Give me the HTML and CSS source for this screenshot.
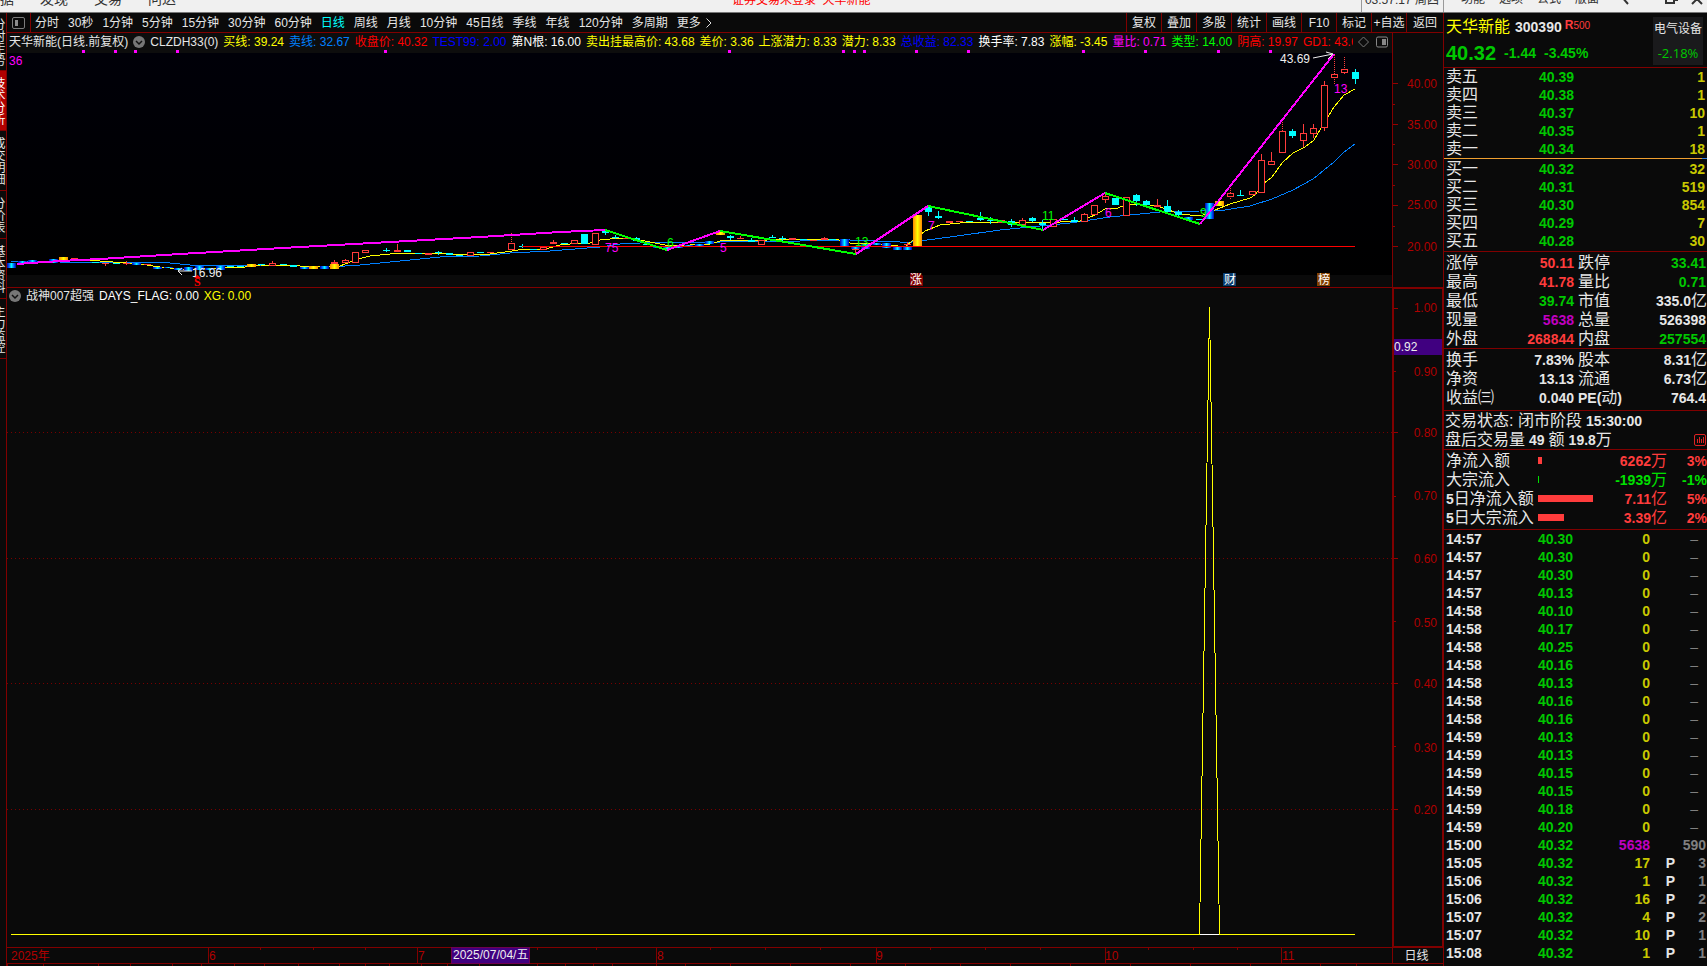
FILE: index.html
```html
<!DOCTYPE html>
<html lang="zh-CN">
<head>
<meta charset="utf-8">
<title>天华新能 300390</title>
<link rel="stylesheet" href="styles.css">
</head>
<body>
<div class="app">
  <header class="menubar">
    <nav class="menu menu-main">
      <button>数据</button><button>发现</button><button>交易</button><button>问达</button>
    </nav>
    <div class="notice">证券交易未登录&nbsp; 天华新能</div>
    <div class="menu menu-side">
      <span class="clock">03:57:17 周四</span>
      <button>功能</button><button>选项</button><button>公式</button><button>版面</button>
      <svg class="winctl" width="86" height="12" viewBox="0 0 86 12" aria-hidden="true">
        <path d="M0 -4l7 8M45 -3v6h8v-6M53 0h3v-4" fill="none" stroke="#333" stroke-width="2"/>
        <path d="M71 4l9 -9M81 4l-9 -9" fill="none" stroke="#333" stroke-width="2"/>
      </svg>
    </div>
  </header>

  <aside class="rail">
    <button class="tab t4">分时走势</button>
    <button class="tab t4 active">技术分析</button>
    <button class="tab t4">成交明细</button>
    <button class="tab t3">分价表</button>
    <button class="tab t4">基本资料</button>
    <button class="tab t4">主力监控</button>
  </aside>

  <main class="work">
    <div class="toolbar">
      <button class="layout-btn" aria-label="布局"><svg width="13" height="12" viewBox="0 0 13 12"><rect x=".5" y=".5" width="12" height="11" rx="1.500" fill="none" stroke="#7c7c7c"/><rect x="3" y="3" width="3" height="6" fill="#8c8c8c"/></svg></button>
      <div class="periods">
        <button>分时</button><button>30秒</button><button>1分钟</button><button>5分钟</button><button>15分钟</button><button>30分钟</button><button>60分钟</button><button class="on">日线</button><button>周线</button><button>月线</button><button>10分钟</button><button>45日线</button><button>季线</button><button>年线</button><button>120分钟</button><button>多周期</button><button class="more">更多<svg width="6" height="10" viewBox="0 0 6 10"><path d="M.5 .5l4.500 4.500l-4.500 4.500" fill="none" stroke="#ddd"/></svg></button>
      </div>
      <div class="tools">
        <button>复权</button><button>叠加</button><button>多股</button><button>统计</button><button>画线</button><button>F10</button><button>标记</button><button>+自选</button><button>返回</button>
      </div>
    </div>

    <div class="plots">
      <section class="upper">
        <div class="info">
          <div class="values">
            <span>天华新能(日线.前复权)</span>
            <svg class="drop" width="12" height="12" viewBox="0 0 12 12"><circle cx="6" cy="6" r="6" fill="#777"/><path d="M3 5l3 3l3-3" fill="none" stroke="#111" stroke-width="1.500"/></svg>
            <span class="first">CLZDH33(0)</span>
            <span class="y">买线: 39.24</span><span class="b">卖线: 32.67</span><span class="r">收盘价: 40.32</span><span class="navy">TEST99: 2.00</span><span class="w">第N根: 16.00</span><span class="y">卖出挂最高价: 43.68</span><span class="y">差价: 3.36</span><span class="y">上涨潜力: 8.33</span><span class="y">潜力: 8.33</span><span class="navy">总收益: 82.33</span><span class="w">换手率: 7.83</span><span class="y">涨幅: -3.45</span><span class="m">量比: 0.71</span><span class="g">类型: 14.00</span><span class="r">阴高: 19.97</span><span class="r">GD1: 43.68</span>
          </div>
          <svg class="info-icons" width="34" height="12" viewBox="0 0 34 12"><path d="M6.500 1l5 5l-5 5l-5-5z" fill="none" stroke="#777"/><rect x="19.500" y="1" width="11" height="10" rx="1.500" fill="none" stroke="#888"/><rect x="25" y="3" width="4" height="6" fill="#888"/></svg>
        </div>
        <svg class="kline" viewBox="7 53 1385 234" preserveAspectRatio="none">
          <defs>
            <linearGradient id="sky" x1="0" y1="0" x2="0" y2="1"><stop offset="0" stop-color="#000008"/><stop offset="1" stop-color="#000"/></linearGradient>
            <linearGradient id="cold"><stop offset="0" stop-color="#00a"/><stop offset=".25" stop-color="#06f"/><stop offset=".5" stop-color="#0ff"/><stop offset=".75" stop-color="#06f"/><stop offset="1" stop-color="#00a"/></linearGradient>
            <linearGradient id="warm"><stop offset="0" stop-color="#f80"/><stop offset=".5" stop-color="#ff0"/><stop offset="1" stop-color="#f80"/></linearGradient>
          </defs>
          <rect x="7" y="53" width="1385" height="222" fill="url(#sky)"/>
          <polyline class="ln blue" points="11,261 30,261 60,262 100,262 170,263 190,265 270,265 330,267 360,265 400,261 440,257 480,256 510,253 550,251 600,247 620,244 660,242 720,242 750,241 800,241 850,240 900,242 912,242 950,237 1000,230 1040,226 1070,223 1110,217 1130,215 1160,212 1200,211 1225,210 1250,206 1272,199 1293,190 1313,179 1334,162 1344,152 1355,144"/>
          <polyline class="ln yellow" points="17,264 60,260 75,260 100,261 140,264 160,267 180,269 200,269 220,268 245,267 260,265 300,266 340,266 358,259 370,256 400,253 440,253 460,255 490,254 505,252 525,249 545,249 560,245 580,243 590,243 600,240 620,238 635,239 650,242 665,245 690,245 710,244 720,241 740,240 755,241 780,239 835,239 850,243 870,243 890,245 905,247 912,241 925,231 940,225 960,223 1000,222 1040,223 1060,222 1080,221 1095,215 1105,209 1118,208 1125,205 1145,204 1160,207 1180,214 1200,216 1208,213 1220,208 1230,204 1250,198 1255,195 1263,184 1272,177 1282,163 1293,153 1305,147 1314,140 1324,123 1334,107 1344,95 1355,89"/>
          <g id="candles"></g>
          <rect x="522" y="246" width="833" height="1" fill="#ff0000"/>
          <g class="zig">
            <polyline class="up" points="17,264 60,261 100,259 180,254 300,247 480,237 560,232 605,230"/>
            <polyline class="down" points="605,230 667,250"/>
            <polyline class="up" points="667,250 720,231"/>
            <polyline class="down" points="720,231 856,254"/>
            <polyline class="up" points="856,254 928,206"/>
            <polyline class="down" points="928,206 1043,230"/>
            <polyline class="up" points="1043,230 1105,193"/>
            <polyline class="down" points="1105,193 1200,224"/>
            <polyline class="up" points="1200,224 1220,199 1334,54"/>
          </g>
          <g class="lab mag"><text x="9" y="65">36</text><text x="605" y="252">75</text><text x="720" y="252">5</text><text x="928" y="230">7</text><text x="1105" y="217">6</text><text x="1334" y="93">13</text></g>
          <g class="lab grn"><text x="667" y="247">6</text><text x="855" y="246">13</text><text x="1042" y="220">11</text><text x="1200" y="217">9</text></g>
          <g class="lab wht"><text x="1280" y="63">43.69</text><text x="192" y="277">16.96</text></g>
          <path d="M1313 58l20-4m-7-2l7 2l-5 5M192 271h-14m4-3l-4 3l4 4" fill="none" stroke="#eee"/>
          <path d="M194 278l3.500-3l3.500 3z" fill="red"/>
          <text class="sell" x="194" y="286">S</text>
          <g class="tag"><path d="M910 273h10l3 3v10h-13z" fill="#800000"/><rect x="1223" y="273" width="13" height="13" fill="#0a3c6e"/><rect x="1317" y="273" width="13" height="13" fill="#824000"/><text x="910" y="284">涨</text><text x="1224" y="284">财</text><text x="1318" y="284">榜</text></g>
          <path id="dots" fill="#f0f"/>
        </svg>
        <svg class="paxis" viewBox="1393 33 50 254" preserveAspectRatio="none">
          <path d="M1393 83.500h5M1393 124.500h5M1393 164.500h5M1393 205.500h5M1393 246.500h5M1393 104.500h2M1393 144.500h2M1393 185.500h2M1393 226.500h2" stroke="#960000"/>
          <g class="lab ax"><text x="1437" y="88">40.00</text><text x="1437" y="129">35.00</text><text x="1437" y="169">30.00</text><text x="1437" y="209">25.00</text><text x="1437" y="251">20.00</text></g>
        </svg>
      </section>

      <section class="lower">
        <div class="signal">
          <div class="info plain">
            <div class="values"><svg class="drop" width="12" height="12" viewBox="0 0 12 12"><circle cx="6" cy="6" r="6" fill="#777"/><path d="M3 5l3 3l3-3" fill="none" stroke="#111" stroke-width="1.500"/></svg><span class="title">战神007超强</span><span class="w">DAYS_FLAG: 0.00</span><span class="y">XG: 0.00</span></div>
          </div>
          <svg class="spike" viewBox="7 306 1385 641" preserveAspectRatio="none">
            <path d="M7 432.500H1392M7 558.500H1392M7 683.500H1392M7 809.500H1392" stroke="#780000" stroke-dasharray="1 3"/>
            <polyline class="ln yellow" points="11,934.5 1199.5,934.5 1209.5,307 1219.5,934.5 1355,934.5"/>
            <path d="M1200 934.500h19" stroke="#fff"/>
          </svg>
        </div>
        <svg class="saxis" viewBox="1394 289 48 657" preserveAspectRatio="none">
          <path d="M1394 308.500h4M1394 432.500h4M1394 558.500h4M1394 683.500h4M1394 809.500h4M1394 371.500h2M1394 496.500h2M1394 621.500h2M1394 746.500h2" stroke="#960000"/>
          <g class="lab ax"><text x="1437" y="312">1.00</text><text x="1437" y="376">0.90</text><text x="1437" y="437">0.80</text><text x="1437" y="500">0.70</text><text x="1437" y="563">0.60</text><text x="1437" y="627">0.50</text><text x="1437" y="688">0.40</text><text x="1437" y="752">0.30</text><text x="1437" y="814">0.20</text></g>
          <rect x="1394" y="339" width="48" height="16" fill="#400080"/>
          <g class="lab wht"><text x="1394" y="351">0.92</text></g>
        </svg>
      </section>

      <footer class="timeline">
        <svg class="months" viewBox="7 947 1385 19" preserveAspectRatio="none">
          <path id="ticks" stroke="#800000"/>
          <g class="lab ax st"><text x="11" y="960">2025年</text><text x="209" y="960">6</text><text x="418" y="960">7</text><text x="657" y="960">8</text><text x="876" y="960">9</text><text x="1105" y="960">10</text><text x="1282" y="960">11</text></g>
          <rect x="451.500" y="947.500" width="78" height="16" fill="#400080" stroke="#700050"/>
          <g class="lab wht"><text x="453" y="959">2025/07/04/五</text></g>
        </svg>
        <div class="cycle">日线</div>
      </footer>
    </div>
  </main>

  <aside class="quote">
    <div class="head">
      <div class="ident">
        <div class="name"><b class="cn">天华新能</b><span class="code">300390</span><span class="mark"><b>R</b>500</span></div>
        <div class="price"><strong>40.32</strong><span>-1.44</span><span>-3.45%</span></div>
      </div>
      <a class="sector" href="#sector"><span>电气设备</span><span class="chg">-2.18%</span></a>
    </div>
    <table class="book asks">
      <tr><th>卖五</th><td>40.39</td><td>1</td></tr>
      <tr><th>卖四</th><td>40.38</td><td>1</td></tr>
      <tr><th>卖三</th><td>40.37</td><td>10</td></tr>
      <tr><th>卖二</th><td>40.35</td><td>1</td></tr>
      <tr><th>卖一</th><td>40.34</td><td>18</td></tr>
    </table>
    <div class="balance"><i></i></div>
    <table class="book bids">
      <tr><th>买一</th><td>40.32</td><td>32</td></tr>
      <tr><th>买二</th><td>40.31</td><td>519</td></tr>
      <tr><th>买三</th><td>40.30</td><td>854</td></tr>
      <tr><th>买四</th><td>40.29</td><td>7</td></tr>
      <tr><th>买五</th><td>40.28</td><td>30</td></tr>
    </table>
    <table class="stats first-stats">
      <tr><th>涨停</th><td class="red">50.11</td><th>跌停</th><td class="grn">33.41</td></tr>
      <tr><th>最高</th><td class="red">41.78</td><th>量比</th><td class="grn">0.71</td></tr>
      <tr><th>最低</th><td class="grn">39.74</td><th>市值</th><td>335.0<i>亿</i></td></tr>
      <tr><th>现量</th><td class="mag">5638</td><th>总量</th><td>526398</td></tr>
      <tr><th>外盘</th><td class="red">268844</td><th>内盘</th><td class="grn">257554</td></tr>
    </table>
    <table class="stats more-stats">
      <tr><th>换手</th><td>7.83%</td><th>股本</th><td>8.31<i>亿</i></td></tr>
      <tr><th>净资</th><td>13.13</td><th>流通</th><td>6.73<i>亿</i></td></tr>
      <tr><th>收益㈢</th><td>0.040</td><th><b>PE(</b>动<b>)</b></th><td>764.4</td></tr>
    </table>
    <div class="status">
      <div><span>交易状态: 闭市阶段</span><b>15:30:00</b></div>
      <div><span>盘后交易量</span><b>49</b><span>额</span><span><b>19.8</b>万</span><svg width="12" height="12" viewBox="0 0 12 12"><rect x=".5" y=".5" width="11" height="11" rx="1.500" fill="none" stroke="#d22"/><path d="M3.500 9V5M5.500 9V3M7.500 9V5M9.500 9V3" stroke="#d22"/></svg></div>
    </div>
    <table class="flows">
      <tr class="red"><th>净流入额</th><td><span class="bar" style="width:4px"></span></td><td>6262<i>万</i></td><td>3%</td></tr>
      <tr class="lime"><th>大宗流入</th><td><span class="bar" style="width:1px"></span></td><td>-1939<i>万</i></td><td>-1%</td></tr>
      <tr class="red"><th><b>5</b>日净流入额</th><td><span class="bar" style="width:55px"></span></td><td>7.11<i>亿</i></td><td>5%</td></tr>
      <tr class="red"><th><b>5</b>日大宗流入</th><td><span class="bar" style="width:26px"></span></td><td>3.39<i>亿</i></td><td>2%</td></tr>
    </table>
    <table class="trades">
      <tr><td>14:57</td><td>40.30</td><td>0</td><td></td><td class="nil">–</td></tr>
      <tr><td>14:57</td><td>40.30</td><td>0</td><td></td><td class="nil">–</td></tr>
      <tr><td>14:57</td><td>40.30</td><td>0</td><td></td><td class="nil">–</td></tr>
      <tr><td>14:57</td><td>40.13</td><td>0</td><td></td><td class="nil">–</td></tr>
      <tr><td>14:58</td><td>40.10</td><td>0</td><td></td><td class="nil">–</td></tr>
      <tr><td>14:58</td><td>40.17</td><td>0</td><td></td><td class="nil">–</td></tr>
      <tr><td>14:58</td><td>40.25</td><td>0</td><td></td><td class="nil">–</td></tr>
      <tr><td>14:58</td><td>40.16</td><td>0</td><td></td><td class="nil">–</td></tr>
      <tr><td>14:58</td><td>40.13</td><td>0</td><td></td><td class="nil">–</td></tr>
      <tr><td>14:58</td><td>40.16</td><td>0</td><td></td><td class="nil">–</td></tr>
      <tr><td>14:58</td><td>40.16</td><td>0</td><td></td><td class="nil">–</td></tr>
      <tr><td>14:59</td><td>40.13</td><td>0</td><td></td><td class="nil">–</td></tr>
      <tr><td>14:59</td><td>40.13</td><td>0</td><td></td><td class="nil">–</td></tr>
      <tr><td>14:59</td><td>40.15</td><td>0</td><td></td><td class="nil">–</td></tr>
      <tr><td>14:59</td><td>40.15</td><td>0</td><td></td><td class="nil">–</td></tr>
      <tr><td>14:59</td><td>40.18</td><td>0</td><td></td><td class="nil">–</td></tr>
      <tr><td>14:59</td><td>40.20</td><td>0</td><td></td><td class="nil">–</td></tr>
      <tr><td>15:00</td><td>40.32</td><td class="mag">5638</td><td></td><td>590</td></tr>
      <tr><td>15:05</td><td>40.32</td><td>17</td><td>P</td><td>3</td></tr>
      <tr><td>15:06</td><td>40.32</td><td>1</td><td>P</td><td>1</td></tr>
      <tr><td>15:06</td><td>40.32</td><td>16</td><td>P</td><td>2</td></tr>
      <tr><td>15:07</td><td>40.32</td><td>4</td><td>P</td><td>2</td></tr>
      <tr><td>15:07</td><td>40.32</td><td>10</td><td>P</td><td>1</td></tr>
      <tr><td>15:08</td><td>40.32</td><td>1</td><td>P</td><td>1</td></tr>
    </table>
  </aside>
</div>
<script src="chart.js"></script>
</body>
</html>
```

FILE: styles.css
```css
* { box-sizing: border-box; }
html, body { height: 100%; }
body { margin: 0; background: #0a0a0a; color: #e6e6e6; font: 12px/16px "Liberation Sans", "Noto Sans CJK SC", sans-serif; overflow: hidden; }
button { margin: 0; padding: 0; border: 0; background: none; color: inherit; font: inherit; white-space: nowrap; }
table { border-collapse: collapse; table-layout: fixed; width: 100%; }
th, td { padding: 0; font-weight: inherit; white-space: nowrap; }
i { font-style: normal; }
svg { display: block; flex: none; }

.app { display: grid; grid-template: 13px minmax(0, 1fr) / 7px minmax(0, 1fr) 264px; height: 100vh; min-height: 640px; }

.menubar { grid-column: 1 / -1; display: grid; grid-template: 12px / minmax(0, 7fr) auto minmax(0, 8fr); align-items: end; height: 13px; overflow: hidden; background: #f0f0f0; border-bottom: 1px solid #777; color: #333; }
.menu { display: flex; align-items: flex-end; font-size: 14px; line-height: 16px; padding-bottom: 5px; }
.menu-main { gap: 26px; margin-left: -14px; }
.notice { color: #f00; font-size: 12px; line-height: 16px; padding-bottom: 4px; white-space: nowrap; }
.menu-side { justify-content: flex-end; gap: 14px; font-size: 12px; }
.clock { border: solid #999; border-width: 0 1px; padding: 0 4px 4px 3px; margin: 0 3px -5px 0; font-size: 12px; white-space: nowrap; }
.winctl { margin: 0 0 -5px 8px; }

.rail { display: flex; flex-direction: column; overflow: hidden; border-right: 1px solid #800000; }
.tab { flex: none; writing-mode: vertical-rl; width: 6px; padding-right: 2px; border-bottom: 1px solid #800000; font-size: 12px; line-height: 12px; text-align: center; }
.rail .tab:first-child { height: 58px; }
.t4 { height: 60px; }
.t3 { height: 48px; }
.tab.active { background: #b00000; color: #fff; }

.work { display: flex; flex-direction: column; min-width: 0; }
.toolbar { flex: none; display: flex; height: 20px; border-bottom: 1px solid #800000; }
.layout-btn { width: 24px; padding-left: 5px; border-right: 1px solid #800000; }
.periods { flex: 1; display: flex; gap: 9px; padding-left: 4px; min-width: 0; overflow: hidden; }
.periods .on { color: #0ff; }
.more { display: flex; align-items: center; gap: 5px; }
.tools { display: flex; }
.tools button { width: 35px; border-left: 1px solid #800000; }
.tools button:last-child { width: 37px; }

.plots { flex: 1; display: flex; flex-direction: column; min-height: 0; }
.upper { flex: none; display: grid; grid-template: 20px 234px / minmax(0, 1fr) 51px; border-bottom: 1px solid #800000; }
.info { display: flex; align-items: center; gap: 4px; background: #0d0d0d; padding: 0 0 2px 2px; overflow: hidden; white-space: nowrap; }
.values { flex: 1; display: flex; align-items: center; gap: 5px; min-width: 0; overflow: hidden; }
.values span { flex: none; }
.info-icons { margin-right: 1px; }
.info.plain { height: 18px; background: none; }
.y { color: #ff0; } .b { color: #0080ff; } .r { color: #f00; } .navy { color: #00f; } .w { color: #fff; } .m { color: #f0f; } .g { color: #0f0; }
.kline { width: 100%; height: 100%; overflow: visible; }
.paxis { grid-column: 2; grid-row: 1 / 3; width: 51px; height: 100%; border-left: 1px solid #800000; }

.lower { flex: 1; display: grid; grid-template-columns: minmax(0, 1fr) 51px; grid-template-rows: minmax(0, 1fr); min-height: 0; }
.signal { display: flex; flex-direction: column; min-height: 0; }
.spike { flex: 1; width: 100%; min-height: 0; }
.saxis { width: 51px; height: 100%; border: solid #800000; border-width: 1px 1px 1px 2px; }

.ln { fill: none; stroke-width: 1; shape-rendering: crispEdges; }
.ln.blue { stroke: #0080ff; } .ln.yellow { stroke: #ff0; }
.zig { fill: none; stroke-width: 2; shape-rendering: crispEdges; }
.zig .up { stroke: #f0f; } .zig .down { stroke: #0f0; }
.lab { font-size: 12px; }
.mag { fill: #f0f; } .grn { fill: #0f0; } .wht { fill: #eee; }
.ax { fill: #b00000; text-anchor: end; }
.ax.st { text-anchor: start; }
.sell { fill: #f00; font: bold 12px "Liberation Serif", serif; }
.tag text { fill: #fff; font-size: 12px; }
.c-up { fill: #000; stroke: #ff3c3c; shape-rendering: crispEdges; }
.c-down { fill: #0ff; stroke: #0ff; shape-rendering: crispEdges; }

.timeline { flex: none; display: flex; height: 19px; }
.months { flex: 1; min-width: 0; height: 19px; }
.cycle { width: 51px; height: 17px; padding-right: 3px; border: solid #800000; border-width: 1px 0 1px 1px; text-align: center; line-height: 16px; }

.quote { border-left: 1px solid #800000; overflow: hidden; font: bold 14px/18px "Liberation Sans", "Noto Sans CJK SC", sans-serif; }
.quote th, .quote i, .status { font-weight: 400; font-size: 16px; }
.quote b { font-weight: 700; }
.quote th { text-align: left; }
.quote td { text-align: right; }
.head { display: flex; justify-content: space-between; height: 55px; padding: 4px 4px 2px 2px; border-bottom: 1px solid #800000; }
.ident { display: flex; flex-direction: column; justify-content: space-between; }
.name { display: flex; gap: 5px; line-height: 20px; }
.quote .cn { color: #ff0; font-size: 16px; font-weight: 400; }
.mark { color: #ff3c3c; font-size: 10px; font-weight: normal; line-height: 16px; margin-left: -2px; }
.mark b { font-size: 12px; }
.price { display: flex; align-items: center; gap: 8px; color: #00c800; line-height: 24px; }
.price strong { font-size: 20px; }
.sector { display: flex; flex-direction: column; justify-content: space-between; width: 50px; padding: 3px 0; background: #1a1a1c; color: #e6e6e6; font-size: 12px; font-weight: normal; text-align: center; text-decoration: none; white-space: nowrap; }
.sector .chg { color: #00c800; font: 13px/18px "Open Sans", sans-serif; }

.book td, .book th { height: 18px; line-height: 16px; }
.book th { width: 50px; padding-left: 2px; }
.book td:nth-child(2) { width: 80px; color: #00c800; }
.book td:nth-child(3) { color: #c8c800; padding-right: 2px; }
.balance { display: flex; justify-content: flex-end; height: 1px; margin-bottom: 1px; background: #f0a030; }
.balance i { width: 5px; background: #3080e0; }
.bids { margin-bottom: 1px; }
.stats, .flows { border-collapse: separate; border-spacing: 0; }
.stats { border-top: 1px solid #800000; }
.stats td, .stats th { height: 19px; line-height: 18px; }
.stats th { width: 60px; padding-left: 2px; }
.stats td:nth-child(2) { width: 70px; }
.stats th:nth-child(3) { width: 60px; padding-left: 4px; }
.stats td:nth-child(4) { padding-right: 1px; }
.stats td:nth-child(4):has(i) { padding-right: 0; }
.stats th b { font-size: 14px; }
.first-stats { padding: 1px 0 0; }
.more-stats { padding: 1px 0 3px; }
.quote .red { color: #ff3c3c; }
.quote .grn { color: #00c800; }
.quote .lime { color: #00e000; }
.quote td.mag { color: #c000c0; }
.status { border: solid #800000; border-width: 1px 0; padding-left: 1px; }
.status div { display: flex; align-items: center; gap: 4px; height: 19px; white-space: nowrap; }
.status b { font-size: 14px; }
.status svg { margin-left: auto; margin-right: 1px; }
.flows { padding: 1px 0 2px; border-bottom: 1px solid #800000; }
.flows th, .flows td { height: 19px; line-height: 18px; }
.flows th { width: 94px; padding-left: 2px; color: #e6e6e6; }
.flows th b { font-size: 14px; }
.flows td:nth-child(2) { width: 57px; }
.flows td:nth-child(3) { width: 72px; }
.bar { display: block; height: 7px; background: currentColor; }
.trades td { height: 18px; line-height: 16px; color: #e6e6e6; }
.trades td:nth-child(1) { width: 50px; padding-left: 2px; text-align: left; }
.trades td:nth-child(2) { width: 79px; color: #00c800; }
.trades td:nth-child(3) { width: 77px; color: #c8c800; }
.trades td.mag:nth-child(3) { color: #c000c0; }
.trades td:nth-child(4) { width: 25px; }
.trades td:nth-child(5) { color: #808080; padding-right: 1px; }
.trades td.nil:nth-child(5) { padding-right: 9px; font-weight: normal; }
```

FILE: chart.js
```js
// Each candle: kind, centre x, body top, body bottom, wick top, wick bottom.
// Kinds: r hollow rise, c cyan fall, b shaded fall, y shaded rise.
const CANDLES = [
  ['b',11,263,268],['b',22,261,264],['b',32,260,263],['b',43,261,263],['b',53,259,263],['y',63,257,260],['r',74,258,260],
  ['c',95,262,263],['r',105,263,264,263,266],['c',116,263,264],['r',126,263,264,261,265],['b',136,263,265],['r',147,264,265],['b',157,267,269],['b',168,267,268],
  ['b',178,268,270],['b',188,267,271],['b',199,266,270],['b',209,268,270],['b',220,266,270],['c',230,266,267],
  ['c',240,266,267],['y',251,264,267],['c',261,264,265],['r',272,263,266,261,266],['c',283,264,265],['c',293,265,267],['b',304,267,269],
  ['y',313,266,269],['b',324,266,269],['r',334,262,264,260,264],['y',334,264,269],['r',345,260,263,259,263],['r',355,252,263],['r',365,250,253],
  ['c',386,250,251,248,252],['r',397,250,252,244,252],['c',407,250,252],['c',418,253,254],['r',428,253,255],['c',438,252,253,251,255],['c',449,253,255],
  ['c',459,255,256],['r',470,252,256],['c',480,252,253],['r',490,252,253],['r',511,243,250,233,243],['c',522,246,247,244,248],
  ['c',533,249,250],['r',543,247,250],['r',553,242,244,240,244],['c',564,243,244],['r',574,240,244],['c',584,234,244],['r',595,233,245],['c',605,231,233,230,235],
  ['c',615,237,238,235,239],['r',626,238,239],['c',636,238,241,237,241],['c',646,244,245],['b',657,246,248],['b',667,247,249],
  ['b',678,246,248],['b',688,245,247],['b',699,244,246],['b',709,241,244],['y',720,231,235],['c',730,236,238,235,240],
  ['r',740,238,239,236,239],['c',751,240,242,238,242],['r',761,240,245],['c',772,237,238,235,238],['c',782,238,239,236,241],['r',792,238,240],
  ['c',803,239,240],['r',813,240,241],['r',824,238,240,237,240],['c',832,239,240],['b',844,239,246],['r',855,249,250,249,253],
  ['b',855,247,249],['b',865,244,249],['b',876,243,245],['b',886,243,248],['b',897,247,250],['r',907,244,245,242,246],['b',907,247,250],
  ['y',917,215,247],['c',928,207,212,205,216],['c',938,216,218,211,219],['r',949,221,223],['r',959,221,222],
  ['c',969,221,222],['c',980,218,220,212,221],['c',990,220,221,217,224],['r',1001,220,223],['c',1011,221,225,219,227],
  ['r',1022,220,225,218,225],['c',1032,218,221,217,222],['c',1042,223,225,220,230],['r',1053,219,227],['c',1064,219,220],
  ['c',1074,220,222,217,222],['r',1084,214,222,213,222],['r',1094,205,215],['r',1105,196,200,193,203],['c',1115,198,205],
  ['r',1126,197,216],['c',1136,195,201,194,206],['c',1146,201,205,200,205],['r',1157,205,207,199,207],['c',1167,206,212,200,212],
  ['c',1178,212,215,210,216],['b',1188,217,220],['c',1199,219,220],['b',1209,203,219],['y',1219,201,206],
  ['r',1230,193,197,188,199],['c',1240,195,196,190,196],['r',1252,191,195],['r',1261,160,193,154,160],['r',1271,161,165,152,165],
  ['r',1282,131,153,120,131],['c',1292,131,136,129,138],['r',1303,133,141,124,147],['r',1313,128,134,124,138],
  ['r',1324,85,128,81,131],['r',1334,74,78,55,84],['r',1344,69,73,57,74],['c',1355,72,79,69,84]
];
// Rises whose upper wick is drawn dotted.
const DOTTED = [511, 1230, 1282, 1334, 1344];
const NS = 'http://www.w3.org/2000/svg';
const layer = document.getElementById('candles');
const add = (name, attrs) => {
  const el = document.createElementNS(NS, name);
  for (const key in attrs) el.setAttribute(key, attrs[key]);
  layer.appendChild(el);
};
for (const [kind, x, top, bottom, high, low] of CANDLES) {
  if (kind === 'b' || kind === 'y') {
    add('rect', { x: x - 4, y: top, width: 9, height: bottom - top, fill: kind === 'b' ? 'url(#cold)' : 'url(#warm)' });
    continue;
  }
  const cls = kind === 'r' ? 'c-up' : 'c-down';
  if (high) {
    const dash = DOTTED.includes(x) ? '1 1' : 'none';
    add('path', { class: cls, d: `M${x + .5} ${high}V${low}`, 'stroke-dasharray': dash });
  }
  add('rect', { class: cls, x: x - 2.5, y: top + .5, width: 6, height: Math.max(bottom - top - 1, 0) || .1 });
}

const dots = [82,114,134,176,384,728,842,853,863,915,967,1082,1144,1217,1269];
document.getElementById('dots').setAttribute('d', dots.map(x => `M${x} 50h3v3h-3z`).join(''));

const months = [208,417,656,876,1105,1281];
const weeks = [260,313,365,537,596,710,765,820,930,985,1040,1148,1193,1237];
const days = [7,43,98,130,172,201,234,264,298,339,365,389,421,447,479,537,565,593,612,656,685,730,790,850,905,960,1010,1070,1130,1190,1250,1320,1356];
document.getElementById('ticks').setAttribute('d', 'M7 947.5H1392M7 963.5H1392'
  + months.map(x => `M${x}.5 948V963`).join('')
  + weeks.map(x => `M${x}.5 948v2`).join('')
  + days.map(x => `M${x}.5 964v2`).join(''));
```
